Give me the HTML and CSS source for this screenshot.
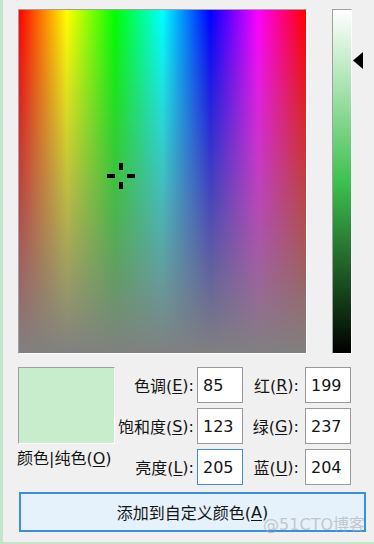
FILE: index.html
```html
<!DOCTYPE html>
<html lang="zh-CN">
<head>
<meta charset="utf-8">
<title>颜色</title>
<link rel="stylesheet" href="styles.css">
</head>
<body>
<div class="dialog">
  <div class="top">
    <div class="spectrum">
      <svg class="cross" width="30" height="30" viewBox="0 0 30 30">
        <rect x="13" y="1" width="4" height="7" fill="#000"/>
        <rect x="13" y="20" width="4" height="7" fill="#000"/>
        <rect x="1" y="12" width="8" height="4" fill="#000"/>
        <rect x="21" y="12" width="8" height="4" fill="#000"/>
      </svg>
    </div>
    <div class="lum-wrap">
      <div class="lum"></div>
      <svg class="arrow" width="10" height="17" viewBox="0 0 10 17">
        <polygon points="0,8.5 10,0 10,17" fill="#000"/>
      </svg>
    </div>
  </div>
  <div class="fields">
    <div class="preview"></div>
    <div class="preview-label">颜色|纯色(<u>O</u>)</div>
    <div class="lbl c2 r1">色调(<u>E</u>):</div>
    <div class="field c3 r1">85</div>
    <div class="lbl lbl2 c4 r1">红(<u>R</u>):</div>
    <div class="field c5 r1">199</div>
    <div class="lbl c2 r2">饱和度(<u>S</u>):</div>
    <div class="field c3 r2">123</div>
    <div class="lbl lbl2 c4 r2">绿(<u>G</u>):</div>
    <div class="field c5 r2">237</div>
    <div class="lbl c2 r3">亮度(<u>L</u>):</div>
    <div class="field focus c3 r3">205</div>
    <div class="lbl lbl2 c4 r3">蓝(<u>U</u>):</div>
    <div class="field c5 r3">204</div>
  </div>
  <div class="btn-row">
    <div class="add">添加到自定义颜色(<u>A</u>)</div>
    <span class="watermark">@51CTO博客</span>
  </div>
</div>
</body>
</html>
```

FILE: styles.css
```css
* { box-sizing: border-box; }
html, body { margin: 0; padding: 0; background: #f0f0f0; }
body {
  font-family: "DejaVu Sans", "Noto Sans CJK SC", sans-serif;
  font-size: 16px;
  color: #141414;
}
.dialog {
  width: 374px;
  height: 544px;
  border-left: 3px solid #c3e5c8;
  border-bottom: 2px solid #c3e5c8;
  padding-top: 9px;
  padding-left: 15px;
}
.top {
  display: flex;
  align-items: flex-start;
}
.spectrum {
  position: relative;
  width: 289px;
  height: 345px;
  border-top: 1px solid #a0a0a0;
  border-left: 1px solid #a0a0a0;
  border-right: 1px solid #ffffff;
  border-bottom: 1px solid #ffffff;
  background:
    linear-gradient(to bottom, rgba(128,128,128,0), rgb(128,128,128)),
    linear-gradient(to right, #ff0000 0%, #ffff00 16.67%, #00ff00 33.33%, #00ffff 50%, #0000ff 66.67%, #ff00ff 83.33%, #ff0000 100%);
  background-clip: padding-box;
}
.cross {
  position: absolute;
  left: 87px;
  top: 152px;
  display: block;
}
.lum-wrap {
  position: relative;
  margin-left: 25px;
}
.lum {
  width: 20px;
  height: 345px;
  border-top: 1px solid #a0a0a0;
  border-left: 1px solid #a0a0a0;
  border-right: 1px solid #ffffff;
  border-bottom: 1px solid #ffffff;
  background: linear-gradient(to bottom, #ffffff 0%, rgb(62,193,78) 50%, #000000 100%);
}
.arrow {
  position: absolute;
  left: 21px;
  top: 43px;
  display: block;
}
.fields {
  margin-top: 13px;
  display: grid;
  grid-template-columns: 97px 82px 46px 62px 46px;
  grid-template-rows: 36px 36px 36px;
  row-gap: 5px;
}
.preview {
  grid-column: 1;
  grid-row: 1 / 3;
  background: rgb(199,237,204);
  border-top: 1px solid #a0a0a0;
  border-left: 1px solid #a0a0a0;
  border-right: 1px solid #ffffff;
  border-bottom: 1px solid #ffffff;
}
.preview-label {
  grid-column: 1 / 3;
  grid-row: 3;
  align-self: start;
  margin-left: -1px;
  line-height: 20px;
  white-space: nowrap;
}
.lbl {
  display: flex;
  align-items: center;
  justify-content: flex-end;
  padding-right: 3px;
  white-space: nowrap;
}
.lbl2 { padding-right: 6px; }
.c2 { grid-column: 2; }
.c3 { grid-column: 3; }
.c4 { grid-column: 4; }
.c5 { grid-column: 5; }
.r1 { grid-row: 1; }
.r2 { grid-row: 2; }
.r3 { grid-row: 3; }
.field {
  background: #ffffff;
  border: 1px solid #9a9a9a;
  display: flex;
  align-items: center;
  padding-left: 5px;
}
.field.focus { border-color: #3c8edc; }
u { text-decoration-thickness: 1px; text-underline-offset: 2px; }
.btn-row {
  position: relative;
  margin-top: 7px;
  margin-left: 1px;
  width: 347px;
}
.add {
  height: 40px;
  background: #e5f1fb;
  border: 2px solid #3a90dd;
  display: flex;
  align-items: center;
  justify-content: center;
}
.watermark {
  position: absolute;
  right: 1px;
  top: 25px;
  color: rgba(170,170,170,0.6);
  font-size: 16px;
  line-height: 16px;
  white-space: nowrap;
}
```
